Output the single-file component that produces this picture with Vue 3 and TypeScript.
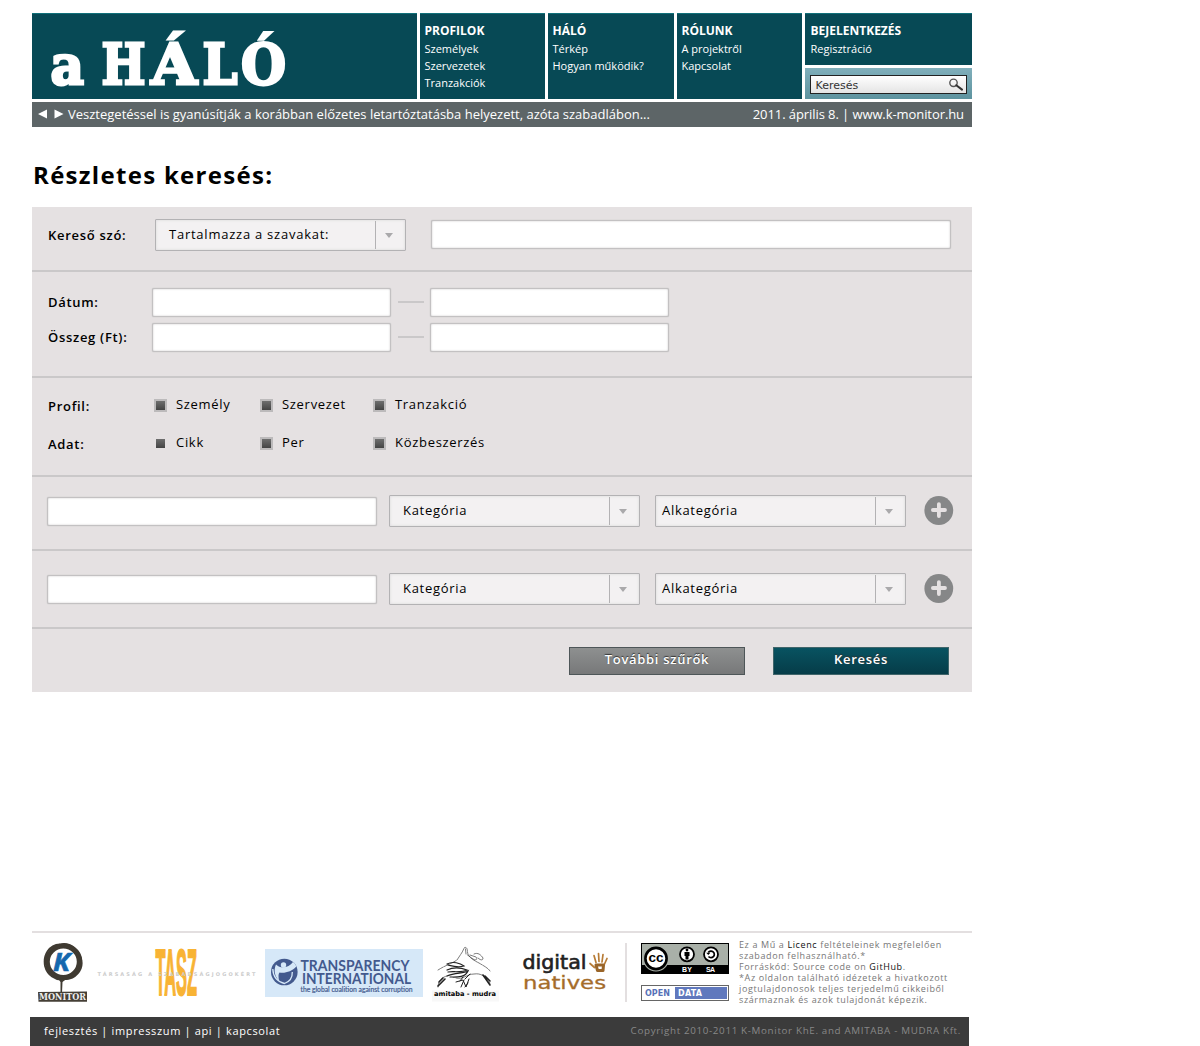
<script setup lang="ts">
import { ref } from 'vue'

interface MenuColumn {
  title: string
  items: string[]
}

interface CheckRow {
  label: string
  options: { text: string; framed: boolean }[]
}

const menu: MenuColumn[] = [
  { title: 'PROFILOK', items: ['Személyek', 'Szervezetek', 'Tranzakciók'] },
  { title: 'HÁLÓ', items: ['Térkép', 'Hogyan működik?'] },
  { title: 'RÓLUNK', items: ['A projektről', 'Kapcsolat'] },
]

const ranges: string[] = ['Dátum:', 'Összeg (Ft):']

const checks: CheckRow[] = [
  {
    label: 'Profil:',
    options: [
      { text: 'Személy', framed: true },
      { text: 'Szervezet', framed: true },
      { text: 'Tranzakció', framed: true },
    ],
  },
  {
    label: 'Adat:',
    options: [
      { text: 'Cikk', framed: false },
      { text: 'Per', framed: true },
      { text: 'Közbeszerzés', framed: true },
    ],
  },
]

const filters = ref<string[]>(['', ''])
</script>

<template>
  <div class="page">
    <header class="header">
      <div class="brand">
        <svg width="385" height="86" viewBox="32 13 385 86">
          <g class="brand-text">
            <text x="50.500" y="83.500" textLength="33.500" lengthAdjust="spacingAndGlyphs" font-size="54">a</text>
            <text x="101.500" y="83.500" textLength="44" lengthAdjust="spacingAndGlyphs">H</text>
            <text x="151" y="83.500" textLength="46" lengthAdjust="spacingAndGlyphs">Á</text>
            <text x="202.500" y="83.500" textLength="35" lengthAdjust="spacingAndGlyphs">L</text>
            <text x="241" y="83.500" textLength="45" lengthAdjust="spacingAndGlyphs">Ó</text>
          </g>
        </svg>
      </div>
      <nav v-for="(col, i) in menu" :key="col.title" class="menu" :class="{ wide: i === 1 }">
        <h2>{{ col.title }}</h2>
        <a v-for="item in col.items" :key="item">{{ item }}</a>
      </nav>
      <div class="account">
        <div class="menu login">
          <h2>BEJELENTKEZÉS</h2>
          <a>Regisztráció</a>
        </div>
        <div class="search">
          <div class="search-box">
            <span>Keresés</span>
            <svg width="16" height="13" viewBox="0 0 16 13">
              <circle cx="5.5" cy="4.8" r="3.7" fill="none" stroke="#555" stroke-width="1.4" />
              <path d="M8.3 7.200 L14 11.600" stroke="#333" stroke-width="2" stroke-linecap="round" />
            </svg>
          </div>
        </div>
      </div>
    </header>

    <div class="news">
      <svg width="27" height="12" viewBox="0 0 27 12">
        <path d="M9 1.500 V10.500 L0 6 Z M16.500 1.500 V10.500 L25.500 6 Z" fill="#fff" />
      </svg>
      <span class="headline">Vesztegetéssel is gyanúsítják a korábban előzetes letartóztatásba helyezett, azóta szabadlábon...</span>
      <span class="date">2011. április 8. | www.k-monitor.hu</span>
    </div>

    <h1>Részletes keresés:</h1>

    <main class="panel">
      <section class="row word">
        <label>Kereső szó:</label>
        <div class="select"><span>Tartalmazza a szavakat:</span><i /></div>
        <input type="text" />
      </section>
      <section class="row ranges">
        <div v-for="r in ranges" :key="r" class="range">
          <label>{{ r }}</label>
          <input type="text" />
          <b class="dash" />
          <input type="text" />
        </div>
      </section>
      <section class="row checks">
        <div v-for="c in checks" :key="c.label" class="check-row">
          <label>{{ c.label }}</label>
          <span v-for="o in c.options" :key="o.text" class="option">
            <i class="box" :class="{ framed: o.framed }" /><span>{{ o.text }}</span>
          </span>
        </div>
      </section>
      <section v-for="(_, i) in filters" :key="i" class="row filter">
        <input v-model="filters[i]" type="text" />
        <div class="select"><span>Kategória</span><i /></div>
        <div class="select sub"><span>Alkategória</span><i /></div>
        <svg class="plus" width="30" height="31" viewBox="0 0 30 31">
          <circle cx="14.800" cy="15.500" r="14.400" fill="#868788" />
          <path d="M14.900 9.100 V21 M8.900 15 H21" stroke="#e5e1e2" stroke-width="3.800" stroke-linecap="round" />
        </svg>
      </section>
      <section class="row actions">
        <button class="more">További szűrők</button>
        <button class="go">Keresés</button>
      </section>
    </main>

    <footer>
      <div class="partners">
        <svg class="p-monitor" width="50" height="60" viewBox="38 943 50 60">
          <ellipse cx="63.300" cy="961.800" rx="16" ry="15.700" fill="none" stroke="#3f3a31" stroke-width="5" />
          <path d="M45 966 C43 955 49 945 60 944.500 C70 942 81 950 81.500 961 C83 970 75 979 66 979 C55 982 47 974 45 966 Z" fill="none" stroke="#3f3a31" stroke-width="1.800" />
          <path d="M58 978.500 H67 L62.500 982 L62 993 H60.500 L60.500 982 Z" fill="#3f3a31" />
          <text x="53" y="970.500" class="k" textLength="17" lengthAdjust="spacingAndGlyphs">K</text>
          <path d="M38 992 L87 991.500 V1001.800 H38.500 Z" fill="#453f36" />
          <text x="39" y="1000" class="monitor" textLength="47" lengthAdjust="spacing">MONITOR</text>
        </svg>
        <svg class="p-tasz" width="161" height="52" viewBox="97 947 161 52">
          <text x="155.500" y="994.800" class="tasz" textLength="41.500" lengthAdjust="spacingAndGlyphs">TASZ</text>
          <text x="97.500" y="976" class="tasz-sub" textLength="158" lengthAdjust="spacing">TÁRSASÁG A SZABADSÁGJOGOKÉRT</text>
        </svg>
        <svg class="p-ti" width="158" height="48" viewBox="265 949 158 48">
          <rect x="265" y="949" width="158" height="48" fill="#d6e8f8" />
          <circle cx="284.300" cy="972" r="13.300" fill="#435a8e" />
          <path d="M276 964.500 C273.500 970 274.500 976 279 981 C278.500 977 278 974 279.500 972.500 C285 973.500 292 971.500 296.300 966.500 C295.500 964.500 294.500 963 293 962 C289 967.500 281 969.500 276 964.500 Z" fill="#d6e8f8" />
          <path d="M272.800 969 C273 976 277 981.500 284.500 983.500 C290 981.500 292.500 977.500 292.300 972" fill="none" stroke="#d6e8f8" stroke-width="1.300" />
          <circle cx="283.500" cy="965" r="2.700" fill="#d6e8f8" />
          <g class="ti">
            <text x="300.500" y="971" textLength="109" lengthAdjust="spacingAndGlyphs">TRANSPARENCY</text>
            <text x="302" y="983.700" textLength="109" lengthAdjust="spacingAndGlyphs">INTERNATIONAL</text>
            <text x="300.500" y="991.800" class="ti-sub" textLength="112" lengthAdjust="spacingAndGlyphs">the global coalition against corruption</text>
          </g>
        </svg>
        <svg class="p-amitaba" width="68" height="56" viewBox="432 946 68 56">
          <rect x="432" y="990.500" width="67" height="11" fill="#f8f8f8" />
          <g fill="none" stroke="#444" stroke-width="0.700" stroke-linecap="round">
            <path d="M438 970 C446 965 451 964 457 960 C460 955 463 952 464 948 C466 946.500 467.500 948 467.500 952 C468 957 473 960 479 963 C484 966 488 968 490 971" stroke-dasharray="6 1" />
            <path d="M465.500 949 L466 954 M467.500 955 L473 959 C476 961 478 959 476 957 L470 955 M474 954 C478 952 481 955 483 958 C483 961 480 960 478 958" />
            <path d="M447 964 C453 961 460 963 464 966 C458 968 452 966 448 965 M447 970 C455 966 462 968 467 970 C462 973 452 971 448 972 M447 976 C455 972 463 974 468 971 C465 978 456 977 450 977" stroke="#222" stroke-width="1.200" />
            <path d="M438 987 C438 981 442 977 447 976 M456 978 C463 980 467 974 474 974 C481 973 485 976 490 983" />
            <path d="M438 986 L445 979 M439 982 L443 978 M483 975 L490 985 M485 976 L490 981" stroke="#222" stroke-width="1.600" />
            <path d="M456 982 L463 980 L466 987 L469 979 M461 987 L464 980 M465 987 L468 983 M463 977 L460 981 M470 974 L465 979" stroke="#222" stroke-width="1" />
          </g>
          <text x="434" y="996.400" class="amitaba" textLength="62" lengthAdjust="spacingAndGlyphs">amitaba - mudra</text>
        </svg>
        <svg class="p-dn" width="96" height="48" viewBox="515 948 96 48">
          <text x="522.500" y="969" class="digital" textLength="64" lengthAdjust="spacingAndGlyphs">digital</text>
          <text x="523" y="989" class="natives" textLength="83" lengthAdjust="spacingAndGlyphs">natives</text>
          <g fill="none" stroke="#b77b35" stroke-width="1.700" stroke-linecap="round">
            <path d="M596 962.500 L594 955.500 M599 961.500 L598.500 953.500 M602 962 L603 954.500 M604.500 964 L607 958.500 M594.500 967.500 L590 963.500" />
            <path d="M596 965 L603.500 965 L603 970.500 L597.500 970.500 Z" stroke="#9a6529" stroke-width="3" stroke-linejoin="round" />
          </g>
        </svg>
        <div class="divider" />
        <div class="badges">
          <svg width="88" height="31" viewBox="0 0 88 31">
            <rect width="88" height="31" fill="#000" />
            <rect x="1" y="1" width="86" height="21" fill="#a9b0a8" />
            <circle cx="15" cy="15.500" r="13" fill="#a9b0a8" />
            <circle cx="15" cy="15.500" r="10.600" fill="#fff" stroke="#000" stroke-width="2.600" />
            <text x="7.500" y="19" class="cc" textLength="15" lengthAdjust="spacingAndGlyphs">cc</text>
            <circle cx="46" cy="11.300" r="7" fill="#fff" stroke="#000" stroke-width="1.800" />
            <circle cx="46" cy="7" r="1.400" />
            <path d="M43.500 9 H48.500 V13 H47.500 V16.500 H44.500 V13 H43.500 Z" />
            <circle cx="70" cy="11.300" r="7" fill="#fff" stroke="#000" stroke-width="1.800" />
            <path d="M67.300 9.500 A3.300 3.300 0 1 1 67.500 13.500" fill="none" stroke="#000" stroke-width="1.700" />
            <path d="M65.200 9.800 H69.400 L67.300 12 Z" />
            <text x="41" y="28.800" class="ccl" textLength="10">BY</text>
            <text x="65" y="28.800" class="ccl" textLength="9">SA</text>
          </svg>
          <svg width="88" height="16" viewBox="0 0 88 16">
            <rect x="0.500" y="0.500" width="87" height="15" fill="#fff" stroke="#666" />
            <rect x="34" y="2" width="52" height="12" fill="#6078bd" />
            <text x="4" y="11" class="od" fill="#5872b8" textLength="25">OPEN</text>
            <text x="37" y="11" class="od" fill="#fff" textLength="24">DATA</text>
          </svg>
        </div>
        <p class="license">
          Ez a Mű a <a>Licenc</a> feltételeinek megfelelően<br />szabadon felhasználható.*<br />Forráskód: Source code on
          <a>GitHub</a>.<br />*Az oldalon található idézetek a hivatkozott<br />jogtulajdonosok teljes terjedelmű cikkeiből<br />származnak és azok tulajdonát képezik.
        </p>
      </div>
      <div class="bar">
        <span class="links">fejlesztés | impresszum | api | kapcsolat</span>
        <span class="copy">Copyright 2010-2011 K-Monitor KhE. and AMITABA - MUDRA Kft.</span>
      </div>
    </footer>
  </div>
</template>

<style>
body {
  margin: 0;
  background: #fff;
}
</style>

<style scoped>
.page {
  box-sizing: border-box;
  width: 940px;
  height: 1046px;
  margin-left: 32px;
  padding-top: 13px;
  display: flex;
  flex-direction: column;
  font-family: 'Open Sans', 'Noto Sans', sans-serif;
  color: #000;
}
.page * {
  box-sizing: border-box;
}
svg {
  display: block;
  flex: none;
}
.header {
  display: flex;
  gap: 3px;
  height: 86px;
}
.brand {
  width: 385px;
  background: #074955;
  border-top: 1px solid #10707a;
}
.brand svg {
  margin-top: -1px;
}
.brand-text {
  font-family: 'DejaVu Serif', serif;
  font-weight: bold;
  font-size: 55.500px;
  fill: #fff;
  stroke: #fff;
  stroke-width: 2.800px;
}
.menu {
  width: 125px;
  padding: 8px 0 0 4.500px;
  background: #074955;
  border-top: 1px solid #10707a;
  color: #fff;
  font-size: 11px;
}
.menu.wide {
  width: 126px;
}
.menu h2 {
  margin: 0;
  font-size: 12px;
  line-height: 18px;
}
.menu a {
  display: block;
  line-height: 17px;
}
.account {
  width: 167px;
  display: flex;
  flex-direction: column;
  gap: 3px;
}
.menu.login {
  width: 167px;
  height: 52px;
  padding-left: 5.500px;
}
.search {
  height: 31px;
  padding: 7px 5px 0;
  background: linear-gradient(#80afbb, #5d939f);
}
.search-box {
  height: 19px;
  padding: 1px 2px 0 4.500px;
  display: flex;
  align-items: center;
  justify-content: space-between;
  border: 1px solid #222;
  background: linear-gradient(#fff, #e4e4e4);
  font: 11px/17px 'DejaVu Sans', sans-serif;
  color: #333;
}
.search-box svg {
  margin-top: -1px;
}
.news {
  display: flex;
  align-items: center;
  height: 25px;
  margin-top: 3px;
  padding: 0 8px 1px 6px;
  background: #5d6567;
  color: #fff;
  font-size: 13px;
  white-space: nowrap;
}
.headline {
  margin-left: 3px;
}
.date {
  margin-left: auto;
  letter-spacing: -0.080px;
}
h1 {
  margin: 31px 0 0 1px;
  height: 49px;
  font-size: 24px;
  line-height: 34px;
  letter-spacing: 1.300px;
}
.panel {
  height: 485px;
  background: #e5e1e2;
  font-size: 13px;
  letter-spacing: 0.700px;
}
.row {
  display: flex;
  border-bottom: 2px solid #cac8c9;
}
label {
  font-weight: 600;
  line-height: 18px;
}
input {
  height: 29px;
  padding: 0 8px;
  border: 1px solid #c3c1c2;
  border-radius: 2px;
  background: #fff;
  box-shadow: 0 0 1px #aaa8a9, inset 0 0 2px #c8c6c7;
  outline: none;
}
.select {
  display: flex;
  width: 251px;
  height: 32px;
  padding-left: 13px;
  border: 1px solid #b3b2b4;
  border-radius: 1px;
  background: #f3f1f2;
  box-shadow: inset 0 0 3px #d8d6d8;
  line-height: 29px;
}
.select.sub {
  padding-left: 6px;
}
.select span {
  flex: 1;
}
.select i {
  width: 30px;
  margin: 1px 0;
  display: flex;
  align-items: center;
  justify-content: center;
  border-left: 1px solid #b3b2b4;
}
.select i::after {
  content: '';
  margin: 1px 3px 0 0;
  border: 4px solid transparent;
  border-top: 5px solid #aaa9ab;
  border-bottom: 0;
}
.word {
  height: 65px;
  padding: 12px 0 0 16px;
}
.word label {
  width: 107px;
  margin-top: 7px;
}
.word .select {
  letter-spacing: 0.760px;
}
.word input {
  width: 520px;
  margin: 1px 0 0 25px;
}
.ranges {
  height: 106px;
  flex-direction: column;
  gap: 6px;
  padding: 15.500px 0 0 16px;
}
.range {
  display: flex;
  align-items: center;
}
.range label {
  width: 104.400px;
}
.range input {
  width: 239px;
}
.dash {
  width: 26px;
  height: 2px;
  margin: -1px 6px 0 6.600px;
  background: #cac8c9;
}
.checks {
  height: 99px;
  flex-direction: column;
  padding: 16px 0 0 16px;
}
.check-row {
  display: flex;
  height: 38px;
}
.check-row label {
  width: 106px;
  margin-top: 3px;
}
.option {
  display: flex;
  width: 106px;
  gap: 9px;
  line-height: 20px;
}
.option:nth-of-type(2) {
  width: 113px;
}
.option:nth-of-type(3) {
  width: auto;
}
.box {
  width: 13px;
  height: 13px;
  margin-top: 5px;
  padding: 2px;
  background: linear-gradient(#6e6e6e, #444) content-box;
}
.box.framed {
  border: 1px solid #bcbabb;
  padding: 1px;
  background: linear-gradient(#6e6e6e, #444) content-box, #bcbabb padding-box;
}
.filter {
  height: 74px;
  padding: 18px 0 0 15px;
}
.filter + .filter {
  height: 78px;
  padding-top: 22px;
}
.filter input {
  width: 330px;
  margin: 2px 12px 0 0;
}
.select.sub {
  margin-left: 15px;
}
.plus {
  margin-left: 18px;
}
.actions {
  height: 63px;
  border: 0;
  padding: 18px 0 0 537px;
  gap: 28px;
}
button {
  width: 176px;
  height: 28px;
  padding: 0 0 5px;
  border: 1px solid #4e5658;
  font: 600 13px/20px 'Open Sans', sans-serif;
  letter-spacing: 0.700px;
  color: #fff;
  text-shadow: 0 -1px 1px #333;
}
.more {
  background: linear-gradient(#8e9090, #777879);
}
.go {
  background: linear-gradient(#085361, #063c48);
  border-color: #40656a;
}
footer {
  margin-top: auto;
}
.partners {
  display: flex;
  align-items: flex-start;
  height: 86px;
  border-top: 2px solid #e3dfe0;
}
.p-monitor {
  margin: 10px 0 0 6px;
}
.p-tasz {
  margin: 14px 0 0 9px;
}
.p-ti {
  margin: 16px 0 0 7px;
}
.p-amitaba {
  margin: 13px 0 0 9px;
}
.p-dn {
  margin: 15px 0 0 15px;
}
.divider {
  width: 2px;
  height: 59px;
  margin: 10px 14px 0;
  background: #e3dfe0;
}
.badges {
  display: flex;
  flex-direction: column;
  gap: 11px;
  margin-top: 10px;
}
.k {
  font: italic bold 25px 'Open Sans', sans-serif;
  fill: #1568ae;
  stroke: #1568ae;
  stroke-width: 0.600px;
}
.monitor {
  font: bold 9px 'DejaVu Serif', serif;
  font-stretch: condensed;
  fill: #eee;
}
.tasz {
  font: bold 64px 'Liberation Sans', sans-serif;
  fill: #f8b334;
  stroke: #f8b334;
  stroke-width: 1.800px;
}
.tasz-sub {
  font: bold 5px 'DejaVu Sans', sans-serif;
  fill: #ccc;
}
.ti {
  font: bold 16px Lato, sans-serif;
  fill: #435a8e;
}
.ti-sub {
  font-size: 7px;
  font-weight: normal;
  stroke: #435a8e;
  stroke-width: 0.200px;
}
.amitaba {
  font: bold 6.500px 'DejaVu Sans', sans-serif;
}
.digital {
  font: 19px 'DejaVu Sans', sans-serif;
  fill: #222;
  stroke: #222;
  stroke-width: 0.600px;
}
.natives {
  font: 18px 'DejaVu Sans', sans-serif;
  fill: #a56c2a;
  stroke: #a56c2a;
  stroke-width: 0.300px;
}
.cc {
  font: bold 12px 'Liberation Sans', sans-serif;
}
.ccl {
  font: bold 7px 'Liberation Sans', sans-serif;
  fill: #fff;
}
.od {
  font: bold 8px 'DejaVu Sans', sans-serif;
}
.license {
  margin: 6px 0 0 10px;
  font-size: 9px;
  line-height: 11px;
  letter-spacing: 0.620px;
  color: #777;
  white-space: nowrap;
}
.license a {
  color: #111;
}
.bar {
  display: flex;
  justify-content: space-between;
  width: 939px;
  height: 29px;
  margin-left: -2px;
  padding: 0 8px 0 14px;
  background: #3b3b3b;
  line-height: 28px;
  font-size: 11px;
  letter-spacing: 0.650px;
  color: #fff;
  white-space: nowrap;
}
.copy {
  font-size: 9.800px;
  line-height: 27px;
  letter-spacing: 0.660px;
  color: #888;
}
</style>
